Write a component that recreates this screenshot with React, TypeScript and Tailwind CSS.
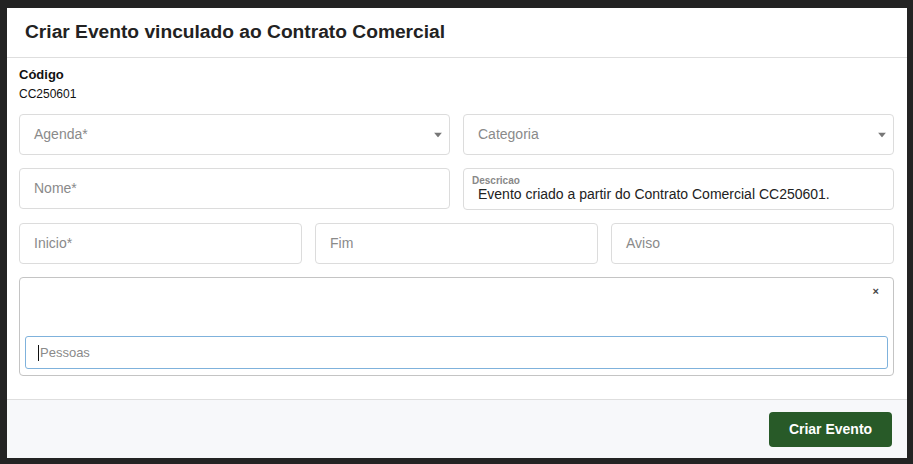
import React from 'react';

const font = { fontFamily: '"Liberation Sans", Arial, sans-serif' };

const Caret = () => (
  <svg width="8" height="5" viewBox="0 0 8 5" className="absolute right-[7px] top-1/2 -translate-y-1/2">
    <path d="M0 0h8L4 5z" fill="#777" />
  </svg>
);

const Field: React.FC<{ label: string; select?: boolean }> = ({ label, select }) => (
  <div className="relative flex h-[41px] items-center rounded-[4px] border border-[#dcdcdc] bg-white pl-[14px] text-[14px] text-[#8a8a8a]">
    {label}
    {select && <Caret />}
  </div>
);

const App: React.FC = () => {
  return (
    <div className="h-[464px] w-[913px] overflow-hidden bg-[#232323] pt-[8px] pl-[7px]" style={font}>
      <div className="flex h-[450px] w-[900px] flex-col bg-white">
        <div className="flex h-[50px] items-center border-b border-[#dedede] px-[18px]">
          <h1 className="text-[19.2px] font-bold text-[#222]">Criar Evento vinculado ao Contrato Comercial</h1>
        </div>

        <div className="flex-1 pl-[12px] pr-[13px] pt-[9px]">
          <p className="text-[13px] font-bold leading-[16px] text-[#111]">Código</p>
          <p className="mt-[3px] text-[12px] leading-[16px] text-[#111]">CC250601</p>

          <div className="mt-[12px] grid grid-cols-2 items-start gap-[13px]">
            <Field label="Agenda*" select />
            <Field label="Categoria" select />
            <Field label="Nome*" />
            <div className="flex h-[42px] flex-col justify-center rounded-[4px] border border-[#dcdcdc] bg-white pl-[8px]">
              <span className="text-[10px] font-bold leading-[11px] text-[#888]">Descricao</span>
              <span className="pl-[6px] text-[14px] leading-[17px] text-[#222]">Evento criado a partir do Contrato Comercial CC250601.</span>
            </div>
          </div>

          <div className="mt-[13px] grid grid-cols-3 gap-[13px]">
            <Field label="Inicio*" />
            <Field label="Fim" />
            <Field label="Aviso" />
          </div>

          <div className="relative mt-[13px] flex h-[99px] flex-col justify-end rounded-[4px] border border-[#c4c4c4] px-[5px] pb-[6px]">
            <span className="absolute right-[14px] top-[5px] text-[11px] font-bold text-[#444]">×</span>
            <div className="flex h-[33px] items-center rounded-[3px] border border-[#7fb2dc] pl-[12px] text-[13px] text-[#8a8a8a]">
              <span className="mr-[1px] h-[16px] w-px bg-[#111]"></span>
              Pessoas
            </div>
          </div>
        </div>

        <div className="flex h-[59px] items-center justify-end border-t border-[#dedede] bg-[#f7f8fa] pr-[15px]">
          <button className="h-[35px] w-[123px] rounded-[4px] bg-[#285a28] text-[14px] font-bold text-white">
            Criar Evento
          </button>
        </div>
      </div>
    </div>
  );
};

export default App;
